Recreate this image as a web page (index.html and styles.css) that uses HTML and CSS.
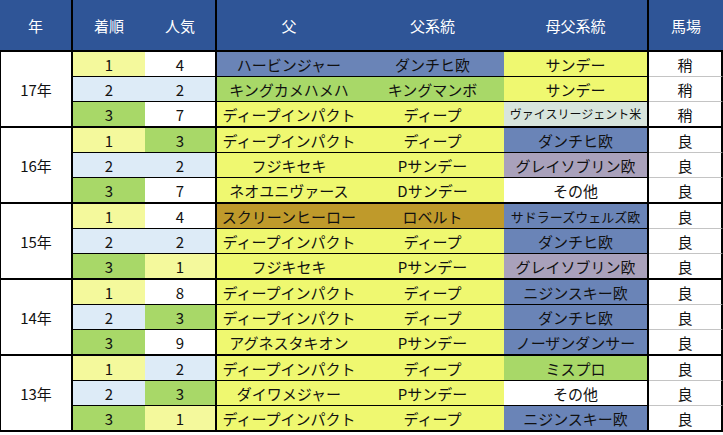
FILE: index.html
```html
<!DOCTYPE html>
<html lang="ja">
<head>
<meta charset="utf-8">
<title>結果表</title>
<link rel="stylesheet" href="styles.css">
</head>
<body>
<table class="results">
  <colgroup>
    <col class="c-year">
    <col class="c-rank">
    <col class="c-pop">
    <col class="c-sire">
    <col class="c-line">
    <col class="c-bms">
    <col class="c-track">
  </colgroup>
  <thead>
    <tr>
      <th class="h-year">年</th>
      <th>着順</th>
      <th class="sep">人気</th>
      <th>父</th>
      <th>父系統</th>
      <th class="sep">母父系統</th>
      <th class="h-track">馬場</th>
    </tr>
  </thead>
  <tbody>
    <tr>
      <td class="year" rowspan="3">17年</td>
      <td class="py">1</td><td class="wh sep">4</td>
      <td class="bl">ハービンジャー</td><td class="bl">ダンチヒ欧</td><td class="yl sep">サンデー</td>
      <td class="track">稍</td>
    </tr>
    <tr>
      <td class="lb">2</td><td class="lb sep">2</td>
      <td class="gr">キングカメハメハ</td><td class="gr">キングマンボ</td><td class="yl sep">サンデー</td>
      <td class="track">稍</td>
    </tr>
    <tr class="end">
      <td class="gr">3</td><td class="wh sep">7</td>
      <td class="yl">ディープインパクト</td><td class="yl">ディープ</td><td class="sg sep small">ヴァイスリージェント米</td>
      <td class="track">稍</td>
    </tr>

    <tr>
      <td class="year" rowspan="3">16年</td>
      <td class="py">1</td><td class="gr sep">3</td>
      <td class="yl">ディープインパクト</td><td class="yl">ディープ</td><td class="bl sep">ダンチヒ欧</td>
      <td class="track">良</td>
    </tr>
    <tr>
      <td class="lb">2</td><td class="lb sep">2</td>
      <td class="yl">フジキセキ</td><td class="yl">Pサンデー</td><td class="mv sep">グレイソブリン欧</td>
      <td class="track">良</td>
    </tr>
    <tr class="end">
      <td class="gr">3</td><td class="wh sep">7</td>
      <td class="yl">ネオユニヴァース</td><td class="yl">Dサンデー</td><td class="wh sep">その他</td>
      <td class="track">良</td>
    </tr>

    <tr>
      <td class="year" rowspan="3">15年</td>
      <td class="py">1</td><td class="wh sep">4</td>
      <td class="br">スクリーンヒーロー</td><td class="br">ロベルト</td><td class="bl sep mid">サドラーズウェルズ欧</td>
      <td class="track">良</td>
    </tr>
    <tr>
      <td class="lb">2</td><td class="lb sep">2</td>
      <td class="yl">ディープインパクト</td><td class="yl">ディープ</td><td class="bl sep">ダンチヒ欧</td>
      <td class="track">良</td>
    </tr>
    <tr class="end">
      <td class="gr">3</td><td class="py sep">1</td>
      <td class="yl">フジキセキ</td><td class="yl">Pサンデー</td><td class="mv sep">グレイソブリン欧</td>
      <td class="track">良</td>
    </tr>

    <tr>
      <td class="year" rowspan="3">14年</td>
      <td class="py">1</td><td class="wh sep">8</td>
      <td class="yl">ディープインパクト</td><td class="yl">ディープ</td><td class="bl sep">ニジンスキー欧</td>
      <td class="track">良</td>
    </tr>
    <tr>
      <td class="lb">2</td><td class="gr sep">3</td>
      <td class="yl">ディープインパクト</td><td class="yl">ディープ</td><td class="bl sep">ダンチヒ欧</td>
      <td class="track">良</td>
    </tr>
    <tr class="end">
      <td class="gr">3</td><td class="wh sep">9</td>
      <td class="yl">アグネスタキオン</td><td class="yl">Pサンデー</td><td class="bl sep">ノーザンダンサー</td>
      <td class="track">良</td>
    </tr>

    <tr>
      <td class="year" rowspan="3">13年</td>
      <td class="py">1</td><td class="lb sep">2</td>
      <td class="yl">ディープインパクト</td><td class="yl">ディープ</td><td class="gr sep">ミスプロ</td>
      <td class="track">良</td>
    </tr>
    <tr>
      <td class="lb">2</td><td class="gr sep">3</td>
      <td class="yl">ダイワメジャー</td><td class="yl">Pサンデー</td><td class="wh sep">その他</td>
      <td class="track">良</td>
    </tr>
    <tr class="end">
      <td class="gr">3</td><td class="py sep">1</td>
      <td class="yl">ディープインパクト</td><td class="yl">ディープ</td><td class="bl sep">ニジンスキー欧</td>
      <td class="track">良</td>
    </tr>
  </tbody>
</table>
</body>
</html>
```

FILE: styles.css
```css
html, body {
  margin: 0;
  padding: 0;
  background: #ffffff;
}

body {
  font-family: "Noto Sans CJK JP", "Noto Sans", sans-serif;
  color: #111111;
}

.results {
  border-collapse: separate;
  border-spacing: 0;
  table-layout: fixed;
  width: 723px;
}

.c-year  { width: 73px; }
.c-rank  { width: 72px; }
.c-pop   { width: 72px; }
.c-sire  { width: 144px; }
.c-line  { width: 143px; }
.c-bms   { width: 145px; }
.c-track { width: 74px; }

.results th,
.results td {
  box-sizing: border-box;
  padding: 0;
  text-align: center;
  vertical-align: middle;
  font-size: 15px;
  font-weight: normal;
  line-height: 1;
  white-space: nowrap;
  overflow: hidden;
}

.results th {
  height: 52px;
  background: #2f5597;
  color: #ffffff;
  border-bottom: 2px solid #000000;
}

.results th.h-year {
  border-right: 2px solid #000000;
}

.results td {
  height: 25px;
  border-bottom: 1px solid #000000;
}

.results tr.end td {
  height: 26px;
  border-bottom: 2px solid #000000;
}

.results td.year {
  background: #ffffff;
  border-left: 1px solid #000000;
  border-right: 2px solid #000000;
  border-bottom: 2px solid #000000;
}

.results th.sep,
.results td.sep {
  border-right: 2px solid #000000;
}

.results td.track {
  background: #ffffff;
  border-bottom: 1px solid #c4c4c4;
  border-right: 2px solid #000000;
}

.results tr.end td.track {
  border-bottom: 2px solid #000000;
}

.small { font-size: 12px !important; }
.mid { font-size: 13px !important; }

.py { background: #f4f99c; }
.lb { background: #ddebf7; }
.gr { background: #a8d868; }
.wh { background: #ffffff; }
.yl { background: #eff870; }
.bl { background: #6a84b7; }
.mv { background: #a9a1bb; }
.br { background: #bf9a2b; }
.sg { background: #d8e5dd; }
```
